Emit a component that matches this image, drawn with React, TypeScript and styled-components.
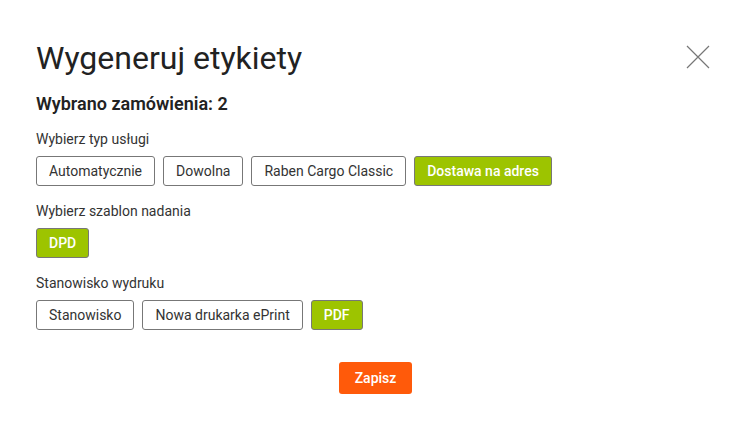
import styled, { createGlobalStyle } from 'styled-components';

const GlobalStyle = createGlobalStyle`
  html, body {
    margin: 0;
    padding: 0;
    background: #fff;
    font-family: Roboto, "Liberation Sans", Arial, sans-serif;
    color: #222;
  }
`;

const Modal = styled.div`
  position: relative;
  width: 751px;
  height: 431px;
  box-sizing: border-box;
  padding: 38px 36px 0;
`;

const Title = styled.h1`
  margin: 0;
  font-size: 32px;
  font-weight: 400;
  line-height: 40px;
  color: #222;
`;

const Close = styled.button`
  position: absolute;
  top: 45px;
  right: 41px;
  width: 24px;
  height: 24px;
  padding: 0;
  border: none;
  background: none;
  cursor: pointer;
`;

const Subtitle = styled.h2`
  margin: 15px 0 0;
  font-size: 18px;
  font-weight: 600;
  line-height: 22px;
  color: #222;
`;

const Section = styled.div`
  margin-top: 17px;
  display: flex;
  flex-direction: column;
  gap: 8px;

  &:first-of-type {
    margin-top: 16px;
  }
`;

const Label = styled.div`
  font-size: 14px;
  line-height: 17px;
  color: #333;
`;

const Options = styled.div`
  display: flex;
  gap: 8px;
`;

const Option = styled.button<{ $active?: boolean }>`
  height: 30px;
  box-sizing: border-box;
  padding: 0 12px;
  border: 1px solid #777;
  border-radius: 3px;
  background: ${(p) => (p.$active ? '#9dc400' : '#fff')};
  color: ${(p) => (p.$active ? '#fff' : '#333')};
  font-family: inherit;
  font-size: 14px;
  font-weight: ${(p) => (p.$active ? 500 : 400)};
  cursor: pointer;
`;

const Footer = styled.div`
  display: flex;
  justify-content: center;
  margin-top: 32px;
`;

const Save = styled.button`
  height: 32px;
  padding: 0 16px;
  border: none;
  border-radius: 3px;
  background: #ff5a0a;
  color: #fff;
  font-family: inherit;
  font-size: 14px;
  font-weight: 500;
  cursor: pointer;
`;

const groups = [
  {
    label: 'Wybierz typ usługi',
    options: ['Automatycznie', 'Dowolna', 'Raben Cargo Classic', 'Dostawa na adres'],
    active: 'Dostawa na adres',
  },
  { label: 'Wybierz szablon nadania', options: ['DPD'], active: 'DPD' },
  {
    label: 'Stanowisko wydruku',
    options: ['Stanowisko', 'Nowa drukarka ePrint', 'PDF'],
    active: 'PDF',
  },
];

export default function App() {
  return (
    <>
      <GlobalStyle />
      <Modal>
        <Title>Wygeneruj etykiety</Title>
        <Close aria-label="Zamknij">
          <svg width="24" height="24" viewBox="0 0 24 24" fill="none" stroke="#777" strokeWidth="1.2">
            <path d="M1 1L23 23M23 1L1 23" />
          </svg>
        </Close>
        <Subtitle>Wybrano zamówienia: 2</Subtitle>
        {groups.map((g) => (
          <Section key={g.label}>
            <Label>{g.label}</Label>
            <Options>
              {g.options.map((o) => (
                <Option key={o} $active={o === g.active}>
                  {o}
                </Option>
              ))}
            </Options>
          </Section>
        ))}
        <Footer>
          <Save>Zapisz</Save>
        </Footer>
      </Modal>
    </>
  );
}
